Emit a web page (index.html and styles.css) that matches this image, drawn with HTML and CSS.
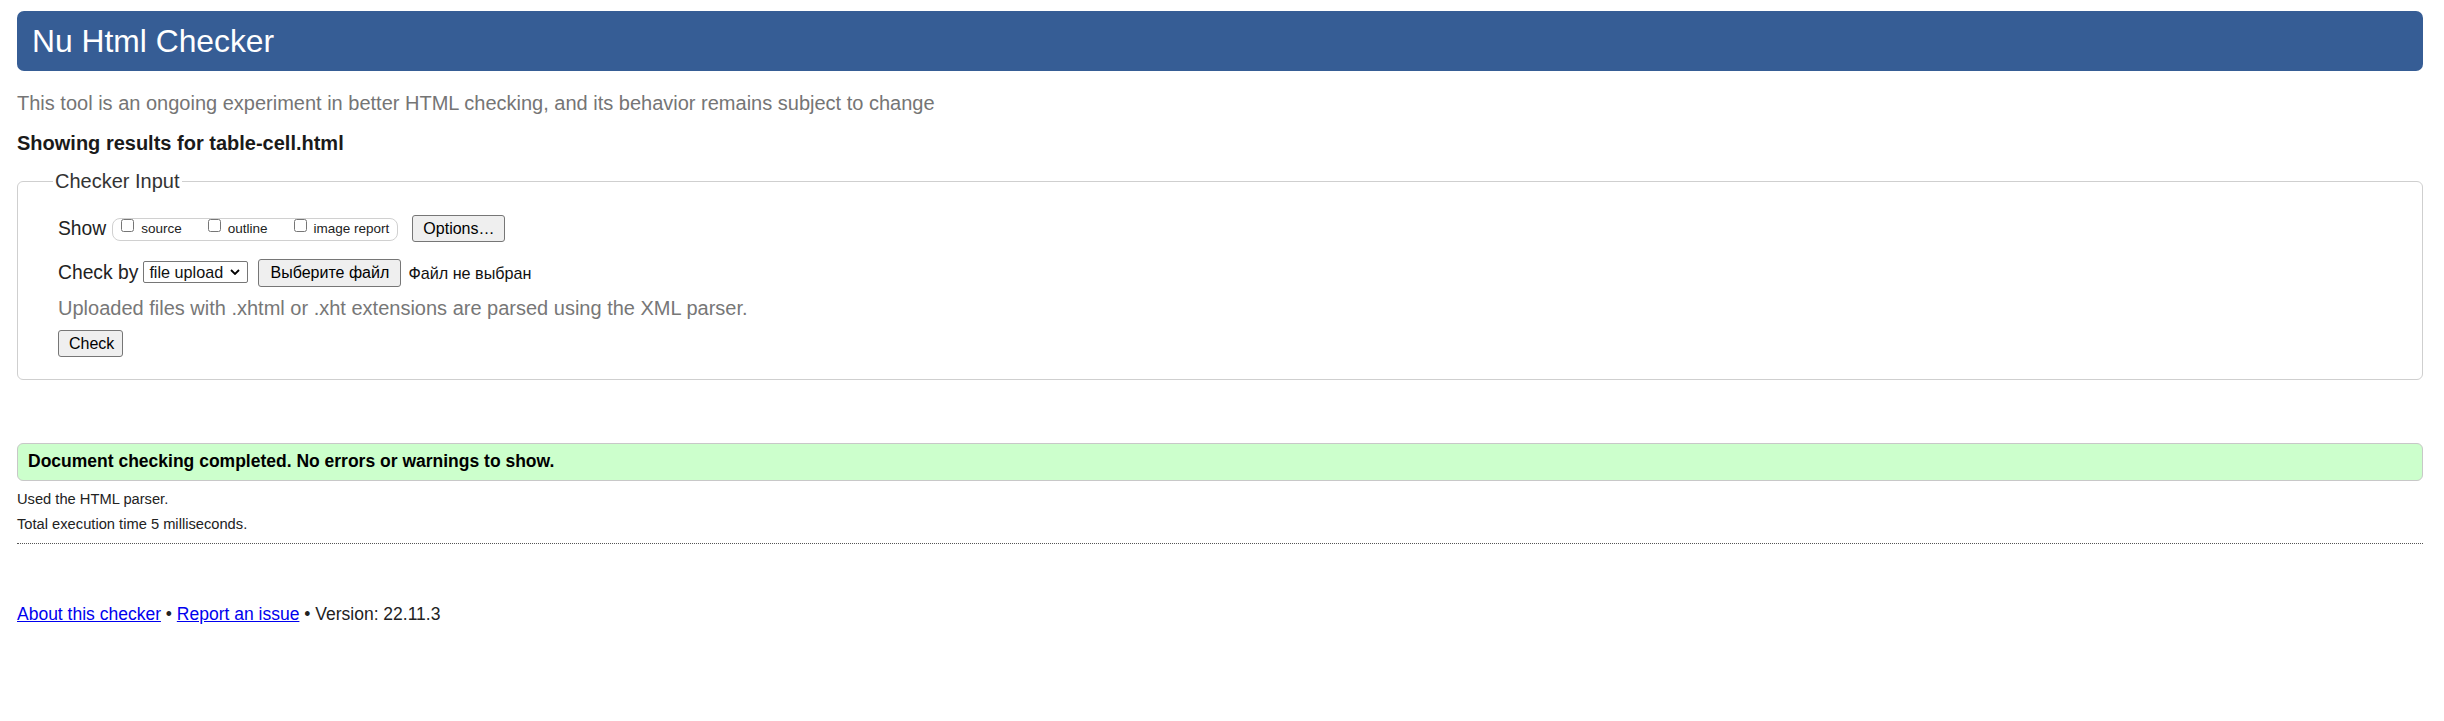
FILE: index.html
```html
<!DOCTYPE html>
<html lang="en">
<head>
<meta charset="utf-8">
<title>Nu Html Checker</title>
<link rel="stylesheet" href="styles.css">
</head>
<body>
<h1 class="title">Nu Html Checker</h1>
<p class="intro">This tool is an ongoing experiment in better HTML checking, and its behavior remains subject to change</p>
<p class="showing">Showing results for table-cell.html</p>

<form class="checker-form">
  <fieldset class="checker-input">
    <legend class="legend">Checker Input</legend>
    <div class="row row-show">
      <span class="row-label">Show</span>
      <span class="extra-options">
        <label class="opt"><input type="checkbox" class="cb"><span class="opt-text">source</span></label>
        <label class="opt"><input type="checkbox" class="cb"><span class="opt-text">outline</span></label>
        <label class="opt"><input type="checkbox" class="cb"><span class="opt-text">image report</span></label>
      </span>
      <button type="button" class="btn btn-options">Options…</button>
    </div>
    <div class="row row-checkby">
      <span class="row-label">Check by</span>
      <span class="select-wrap">
        <select class="select"><option>file upload</option></select>
        <svg class="chevron" width="10" height="6" viewBox="0 0 10 6"><path d="M1 1 L5 5 L9 1" fill="none" stroke="#000" stroke-width="1.8"/></svg>
      </span>
      <button type="button" class="btn btn-file">Выберите файл</button>
      <span class="file-status">Файл не выбран</span>
    </div>
    <p class="upload-note">Uploaded files with .xhtml or .xht extensions are parsed using the XML parser.</p>
    <div class="row row-submit">
      <button type="button" class="btn btn-check">Check</button>
    </div>
  </fieldset>
</form>

<p class="success">Document checking completed. No errors or warnings to show.</p>
<p class="details">Used the HTML parser.</p>
<p class="details details-time">Total execution time 5 milliseconds.</p>
<hr class="separator">

<p class="footer"><a href="#" class="link">About this checker</a> • <a href="#" class="link">Report an issue</a> • Version: 22.11.3</p>
</body>
</html>
```

FILE: styles.css
```css
html, body {
  margin: 0;
  padding: 0;
}
body {
  font-family: "Liberation Sans", Arial, sans-serif;
  color: #222;
  background: #fff;
  padding: 11px 21px 0 17px;
}
.title {
  margin: 0;
  height: 60px;
  line-height: 60px;
  padding-left: 15px;
  background: #365d95;
  color: #fff;
  font-size: 31.8px;
  font-weight: normal;
  border-radius: 7px;
}
.intro {
  margin: 20px 0 0;
  font-size: 20px;
  line-height: 24px;
  color: #757575;
}
.showing {
  margin: 16px 0 0;
  font-size: 20px;
  line-height: 24px;
  font-weight: bold;
  color: #1a1a1a;
}
.checker-form {
  margin: 14px 0 0;
}
.checker-input {
  margin: 0;
  border: 1px solid #cfcfcf;
  border-radius: 6px;
  padding: 22px 0 22px 40px;
  min-width: 0;
}
.legend {
  margin-left: -5px;
  padding: 0 2px;
  font-size: 20px;
  line-height: 24px;
  color: #333;
}
.row {
  display: flex;
  align-items: center;
}
.row-show {
  height: 27px;
}
.row-checkby {
  height: 28px;
  margin-top: 17px;
}
.row-label {
  font-size: 19.3px;
  line-height: 24px;
  color: #222;
}
.extra-options {
  display: flex;
  align-items: flex-start;
  height: 21px;
  margin-left: 6px;
  padding: 0 8px 0 8px;
  border: 1px solid #d0d0d0;
  border-radius: 8px;
  gap: 26px;
  align-self: flex-start;
  margin-top: 3px;
}
.opt {
  display: flex;
  align-items: flex-start;
}
.cb {
  margin: 0;
  width: 13px;
  height: 13px;
}
.opt-text {
  margin-left: 7px;
  font-size: 13.5px;
  line-height: 20px;
  color: #222;
}
.btn {
  font-family: "Liberation Sans", Arial, sans-serif;
  font-size: 16px;
  color: #000;
  background: #efefef;
  border: 1px solid #767676;
  border-radius: 3px;
  padding: 0 10px;
  height: 27px;
}
.btn-options {
  margin-left: 14px;
  width: 93px;
}
.select-wrap {
  position: relative;
  display: inline-block;
  margin-left: 5px;
  height: 22px;
  align-self: flex-start;
  margin-top: 2px;
}
.select {
  appearance: none;
  -webkit-appearance: none;
  width: 105px;
  height: 22px;
  margin: 0;
  padding: 0 0 0 5px;
  font-family: "Liberation Sans", Arial, sans-serif;
  font-size: 16.2px;
  color: #111;
  background: #fff;
  border: 1px solid #767676;
  border-radius: 2px;
}
.chevron {
  position: absolute;
  right: 8px;
  top: 8px;
  pointer-events: none;
}
.btn-file {
  margin-left: 10px;
  height: 28px;
  width: 143px;
}
.file-status {
  margin-left: 7px;
  font-size: 16.2px;
  color: #111;
}
.upload-note {
  margin: 9px 0 0;
  font-size: 20px;
  line-height: 24px;
  color: #777;
}
.row-submit {
  margin-top: 10px;
}
.btn-check {
  width: 65px;
}
.success {
  margin: 63px 0 0;
  height: 36px;
  line-height: 34px;
  padding: 0 0 0 10px;
  box-sizing: content-box;
  background: #ccffcc;
  border: 1px solid #c8c8c8;
  border-radius: 6px;
  font-size: 17.5px;
  font-weight: bold;
  color: #000;
}
.details {
  margin: 8px 0 0;
  font-size: 14.7px;
  line-height: 20px;
  color: #222;
}
.details-time {
  margin-top: 5px;
}
.separator {
  margin: 9px 0 0;
  border: 0;
  border-top: 1px dotted #555;
  height: 0;
}
.footer {
  margin: 59px 0 0;
  font-size: 17.5px;
  line-height: 22px;
  color: #222;
}
.link {
  color: #0000ee;
}
```
